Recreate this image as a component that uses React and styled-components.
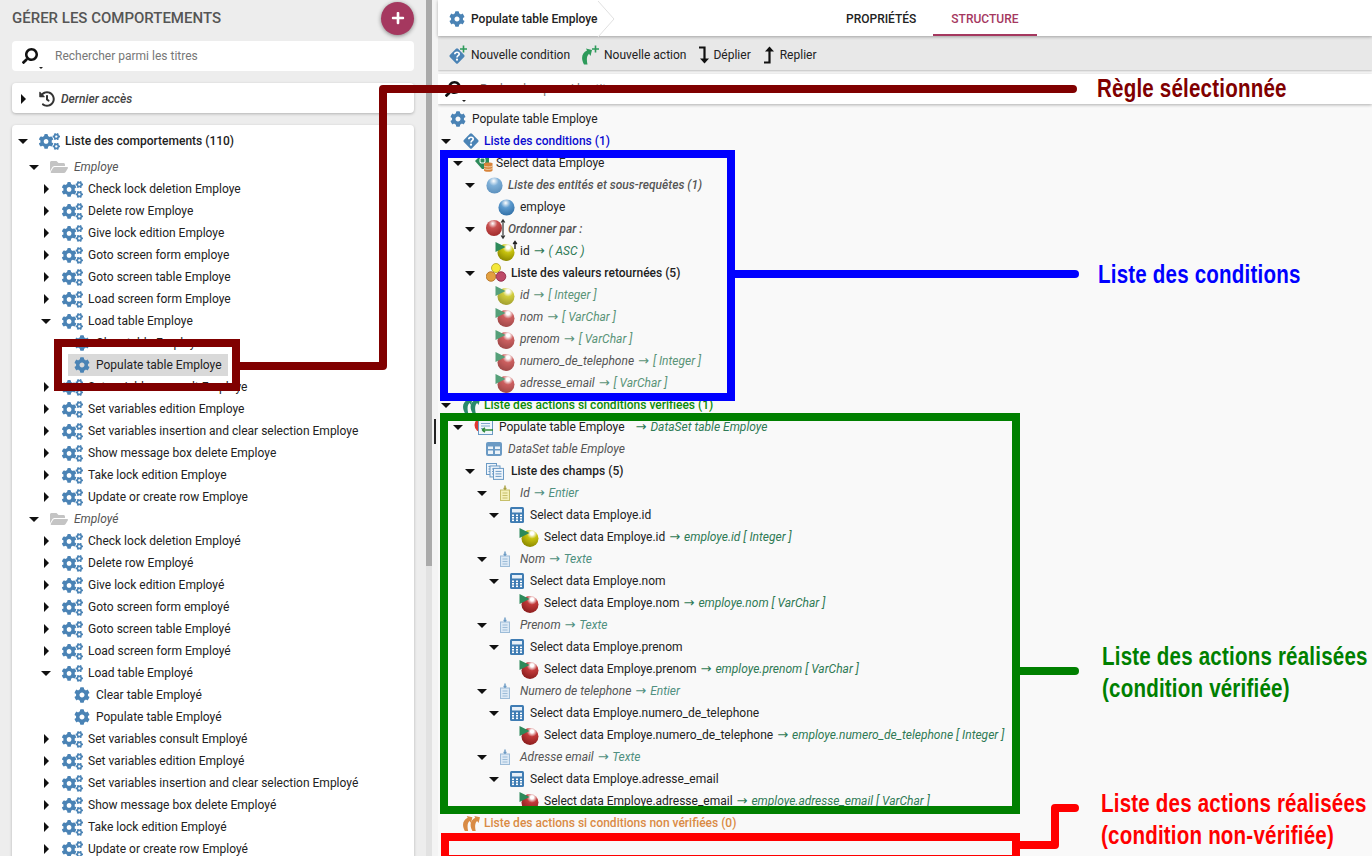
import React, { useId } from 'react';
import styled, { createGlobalStyle } from 'styled-components';
import { FaCog, FaCogs, FaFolderOpen, FaHistory, FaPlus, FaSearch } from 'react-icons/fa';

const STEEL = '#4a83b5';

const GlobalStyle = createGlobalStyle`
  html, body {
    margin: 0;
    height: 100%;
    overflow: hidden;
    font-family: Roboto, "Liberation Sans", sans-serif;
    font-size: 12px;
    color: #222;
  }
`;

/* ---------- small drawings ---------- */

function Ball({ color, size = 20, dark }) {
  const id = useId();
  return (
    <svg width={size} height={size} viewBox="0 0 20 20">
      <defs>
        <radialGradient id={id} cx="45%" cy="22%" r="80%">
          <stop offset="0%" stopColor="#fff" />
          <stop offset="38%" stopColor={color} />
          <stop offset="100%" stopColor={dark} />
        </radialGradient>
      </defs>
      <circle cx="10" cy="10" r="9.500" fill={`url(#${id})`} />
    </svg>
  );
}

const BALLS = {
  blue: ['#5e9bcf', '#2f6ea5'],
  red: ['#c23a3a', '#8e1f1f'],
  yellow: ['#c8c30e', '#8f8c00'],
};

function BallFlag({ tone, faded, arrow }) {
  const [color, dark] = BALLS[tone];
  const id = useId();
  return (
    <FlagWrap $faded={faded}>
      <svg width="24" height="22" viewBox="0 0 24 22">
        <defs>
          <radialGradient id={id} cx="62%" cy="20%" r="78%">
            <stop offset="0%" stopColor="#fff" />
            <stop offset="12%" stopColor="#fff" />
            <stop offset="40%" stopColor={color} />
            <stop offset="100%" stopColor={dark} />
          </radialGradient>
        </defs>
        <circle cx="11" cy="12.500" r="8.500" fill={`url(#${id})`} />
        <path d="M0.500 2 L10.500 7 L0.500 12Z" fill="#2d8a5a" />
        {arrow && <path d="M20 9V2M18.200 4L20 1.500L21.800 4" fill="none" stroke="#222" strokeWidth="1.400" />}
      </svg>
    </FlagWrap>
  );
}

const Diamond = ({ size = 18 }) => (
  <svg width={size} height={size} viewBox="0 0 18 18">
    <rect x="3.200" y="3.200" width="11.600" height="11.600" rx="1.500" transform="rotate(45 9 9)" fill={STEEL} />
    <path d="M6.800 7.200C6.900 4.600 11.200 4.600 11.200 7.100C11.200 8.700 9 8.600 9 10.400" fill="none" stroke="#fff" strokeWidth="1.700" />
    <circle cx="9" cy="12.700" r="1.100" fill="#fff" />
  </svg>
);

const DiamondPlus = () => (
  <svg width="20" height="20" viewBox="0 0 20 20">
    <g transform="translate(0 2)"><rect x="3.200" y="3.200" width="11.600" height="11.600" rx="1.500" transform="rotate(45 9 9)" fill={STEEL} />
      <path d="M6.800 7.200C6.900 4.600 11.200 4.600 11.200 7.100C11.200 8.700 9 8.600 9 10.400" fill="none" stroke="#fff" strokeWidth="1.700" />
      <circle cx="9" cy="12.700" r="1.100" fill="#fff" /></g>
    <path d="M15.500 0.500V7.500M12 4H19" stroke="#2d9a5a" strokeWidth="1.600" />
  </svg>
);

const Curl = ({ color, x = 0 }) => (
  <path transform={`translate(${x} 0)`} d="M3 16.500C-0.500 10 1 5 6 2.500L5 0.500L11 2L9.500 8L8 5.800C5.500 8 5.500 12 6.500 16.500Z" fill={color} />
);

const Curls = ({ color }) => (
  <svg width="18" height="17" viewBox="0 0 19 17">
    <Curl color={color} />
    <Curl color={color} x={8} />
  </svg>
);

const CurlPlus = () => (
  <svg width="20" height="20" viewBox="0 0 20 20">
    <g transform="translate(0 3)"><Curl color="#2d9a5a" /></g>
    <path d="M14.500 0.500V7.500M11 4H18" stroke="#2d9a5a" strokeWidth="1.600" />
  </svg>
);

const SelectIcon = () => (
  <svg width="20" height="20" viewBox="0 0 20 20">
    <path d="M1 8L8 1H15V11L10 16H8Z" fill="#2d8a5a" />
    <rect x="6" y="5" width="5" height="5" rx="1.500" fill="none" stroke="#fff" strokeWidth="1.100" />
    <path d="M10 10.500c0-1.200 8.500-1.200 8.500 0V17.500c0 1.700-8.500 1.700-8.500 0Z" fill="#d8843a" />
    <path d="M10 13c1.500 1.200 7 1.200 8.500 0M10 15.500c1.500 1.200 7 1.200 8.500 0" fill="none" stroke="#f8e0c0" strokeWidth="0.800" />
  </svg>
);

const OrderBall = () => {
  const id = useId();
  return (
    <>
      <defs>
        <radialGradient id={id} cx="42%" cy="22%" r="80%">
          <stop offset="0%" stopColor="#fff" />
          <stop offset="36%" stopColor="#c85050" />
          <stop offset="100%" stopColor="#a02a2a" />
        </radialGradient>
      </defs>
      <circle cx="8" cy="9" r="8" fill={`url(#${id})`} />
    </>
  );
};

const OrderIcon = () => (
  <svg width="20" height="22" viewBox="0 0 20 22">
    <g transform="translate(0 1)"><OrderBall /></g>
    <path d="M17 2V20M15.200 4.500L17 1.800L18.800 4.500M15.200 17.500L17 20.200L18.800 17.500" fill="none" stroke="#333" strokeWidth="1.200" />
  </svg>
);

const TrioIcon = () => (
  <svg width="21" height="20" viewBox="0 0 21 20">
    <circle cx="10" cy="5" r="4.500" fill="#f4e83a" stroke="#b0a020" strokeWidth="0.800" />
    <circle cx="5" cy="13.500" r="4.800" fill="#e3a040" stroke="#b06d20" strokeWidth="0.800" />
    <circle cx="15" cy="13.500" r="4.800" fill="#bd4a68" stroke="#8a2040" strokeWidth="0.800" />
  </svg>
);

const PopulateIcon = () => (
  <svg width="20" height="20" viewBox="0 0 20 20">
    <circle cx="8" cy="8" r="7.500" fill="#e0392f" />
    <rect x="4.500" y="3.500" width="14" height="14" fill="#f0f6fb" stroke="#6b9ac4" />
    <path d="M7 6.500H16M7 9H16M7 11.500H9" stroke="#7fa8cc" />
    <path d="M8 13H19M8 13L11 10.800M8 13L11 15.200" fill="none" stroke="#2d8a3a" strokeWidth="1.500" />
  </svg>
);

const TableIcon = () => (
  <svg width="16" height="14" viewBox="0 0 16 14">
    <rect width="16" height="14" rx="2" fill="#6b9ac4" />
    <path d="M2 4.500H7V7H2ZM9 4.500H14V7H9ZM2 8.500H7V12H2ZM9 8.500H14V12H9Z" fill="#eef4f9" />
  </svg>
);

const DocsIcon = () => (
  <svg width="18" height="17" viewBox="0 0 18 17">
    {[0, 3.500, 7].map((o) => (
      <g key={o} transform={`translate(${o} ${o * 0.7})`}>
        <rect x="0.500" y="0.500" width="10" height="11" fill="#eef4fb" stroke="#6b9ac4" />
        <path d="M2.500 3.500H8.500M2.500 6H8.500M2.500 8.500H8.500" stroke="#6b9ac4" />
      </g>
    ))}
  </svg>
);

const FieldIcon = ({ tone }) => {
  const yellow = tone === 'yellow';
  const fill = yellow ? '#f4f0b8' : '#dce9f5';
  const line = yellow ? '#c6bf6a' : '#9dbcd8';
  return (
    <svg width="14" height="16" viewBox="0 0 14 16">
      <rect x="2.500" y="5" width="9" height="10.500" fill={fill} stroke={line} />
      <path d="M4.500 8H9.500M4.500 10.500H9.500M4.500 13H9.500" stroke={line} />
      <path d="M7 0.500V5M5.500 3.500H8.500" stroke={yellow ? '#a8a040' : '#6b9ac4'} strokeWidth="1.400" />
    </svg>
  );
};

const CalcIcon = () => (
  <svg width="14" height="16" viewBox="0 0 14 16">
    <rect width="14" height="16" rx="1.500" fill="#3f7cb3" />
    <rect x="2" y="2" width="10" height="3.500" fill="#e8f0f8" />
    {[2, 6, 10].map((x) => [7.500, 10, 12.500].map((y) => (
      <rect key={`${x}${y}`} x={x} y={y} width="2" height="1.600" fill="#fff" />
    )))}
  </svg>
);

const Unfold = ({ up }) => (
  <svg width="13" height="18" viewBox="0 0 13 18">
    <g transform={up ? 'translate(0 18) scale(1 -1)' : undefined}>
      <path d="M2 1.500H7.500V14" fill="none" stroke="#111" strokeWidth="2.200" />
      <path d="M3 12.500H12L7.500 17.500Z" fill="#111" />
    </g>
  </svg>
);

/* ---------- layout ---------- */

const Page = styled.div`
  position: relative;
  display: flex;
  width: 100vw;
  height: 100vh;
  overflow: hidden;
  background: #f9f9f9;
`;

const Sidebar = styled.aside`
  width: 426px;
  flex: none;
  box-sizing: border-box;
  padding: 0 12px;
  background: #ededed;
  overflow: hidden;
`;

const SideHead = styled.div`
  display: flex;
  align-items: center;
  justify-content: space-between;
  height: 34px;
  margin: 1px 0 6px;
`;

const SideTitle = styled.h2`
  margin: 0;
  font-size: 15px;
  font-weight: 500;
  color: #555;
`;

const AddButton = styled.button`
  display: flex;
  align-items: center;
  justify-content: center;
  width: 33px;
  height: 33px;
  padding: 0;
  border: none;
  border-radius: 50%;
  color: #fff;
  font-size: 14px;
  background: #a5385f;
  box-shadow: 0 1px 4px rgba(0, 0, 0, 0.45);
`;

const SearchBox = styled.div`
  display: flex;
  align-items: center;
  height: 30px;
  background: #fff;
  color: #777;
  box-shadow: ${(p) => (p.$flat ? '0 1px 3px rgba(0, 0, 0, 0.3)' : 'none')};
  border-radius: ${(p) => (p.$flat ? '0' : '4px')};
`;

const Magnifier = styled.span`
  position: relative;
  display: flex;
  justify-content: center;
  width: ${(p) => p.$w}px;
  margin-right: 4px;
  margin-left: ${(p) => p.$ml}px;
  font-size: 16px;
  color: #111;
  svg { transform: scaleX(-1); }
  &::after {
    content: '';
    position: absolute;
    right: -4px;
    bottom: -5px;
    border: 2.5px solid transparent;
    border-top-color: #222;
    border-bottom: none;
  }
`;

const Card = styled.section`
  margin-top: 12px;
  padding: ${(p) => (p.$list ? '5px 0 0' : '5px 0 3px')};
  background: #fff;
  border-radius: 4px;
  box-shadow: 0 1px 3px rgba(0, 0, 0, 0.25);
`;

const Track = styled.div`
  flex: none;
  width: 6px;
  height: 100%;
  background: linear-gradient(#aaaaaa 566px, #e2e2e2 566px);
`;

const Gutter = styled.div`
  position: relative;
  flex: none;
  width: 6px;
  background: #f4f4f4;
  &::after {
    content: '';
    position: absolute;
    left: 2px;
    top: 419px;
    width: 2px;
    height: 25px;
    background: #222;
  }
`;

const Main = styled.main`
  flex: 1;
  min-width: 0;
  display: flex;
  flex-direction: column;
  background: #f9f9f9;
`;

const TopBar = styled.header`
  display: flex;
  height: 36px;
  flex: none;
  background: #fff;
  box-shadow: 0 1px 3px rgba(0, 0, 0, 0.3);
  z-index: 2;
`;

const Crumb = styled.div`
  display: flex;
  align-items: center;
  gap: 6px;
  width: 390px;
  box-sizing: border-box;
  padding: 1px 0 0 11px;
  font-weight: 500;
  color: #222;
  svg { font-size: 16px; color: ${STEEL}; flex: none; }
`;

const CrumbTip = styled.svg`
  width: 20px;
  height: 36px;
  margin-left: -6px;
`;

const Tab = styled.div`
  display: flex;
  align-items: center;
  padding: 1px 18px 0;
  margin-left: ${(p) => (p.$active ? '-1px' : '0')};
  font-weight: 500;
  color: ${(p) => (p.$active ? '#a5385f' : '#222')};
  box-shadow: ${(p) => (p.$active ? 'inset 0 -2px 0 #a5385f' : 'none')};
`;

const ToolBar = styled.div`
  display: flex;
  align-items: center;
  gap: 11px;
  flex: none;
  box-sizing: border-box;
  height: 34px;
  padding: 3px 0 0 10px;
  background: #e8e8e8;
  box-shadow: 0 1px 2px rgba(0, 0, 0, 0.25);
`;

const Tool = styled.span`
  display: flex;
  align-items: center;
  gap: ${(p) => p.$gap}px;
  color: #222;
`;

const Filter = styled.div`
  flex: none;
  margin-top: 4px;
`;

const TreeArea = styled.div`
  flex: 1;
  min-height: 0;
  padding-top: 4px;
  overflow: hidden;
`;

const Row = styled.div`
  display: flex;
  align-items: center;
  height: 22px;
  margin-bottom: ${(p) => p.$after || 0}px;
  padding-left: ${(p) => p.$pad}px;
  white-space: nowrap;
`;

const ArrowSlot = styled.span`
  display: flex;
  align-items: center;
  justify-content: center;
  flex: none;
  width: 14px;
  margin-right: 9px;
`;

const Arrow = styled.i`
  display: block;
  border-style: solid;
  border-color: transparent;
  ${(p) => (p.$open
    ? 'border-width: 5px 5px 0; border-top-color: #111;'
    : 'border-width: 5px 0 5px 5px; border-left-color: #111;')}
`;

const Content = styled.span`
  display: flex;
  align-items: center;
  height: 22px;
  ${(p) => p.$selected && 'margin-left: -6px; padding: 0 6px; background: #d9d9d9;'}
`;

const IconSlot = styled.span`
  display: flex;
  align-items: center;
  flex: none;
  width: ${(p) => p.$w}px;
  color: ${(p) => p.$color || STEEL};
  font-size: ${(p) => p.$size || 16}px;
`;

const RootCog = styled.span`
  display: flex;
  margin-left: 12px;
`;

const FlagWrap = styled.span`
  display: flex;
  margin-left: -3px;
  opacity: ${(p) => (p.$faded ? 0.8 : 1)};
`;

const Label = styled.span`
  color: ${(p) => p.$color || '#222'};
  font-weight: ${(p) => (p.$strong ? 500 : 400)};
  font-style: ${(p) => (p.$em ? 'italic' : 'normal')};
  margin-left: ${(p) => p.$ml || 0}px;
`;

// line-height 0 so the taller face does not push the row text down
const To = styled.span`
  font-family: "DejaVu Sans", sans-serif;
  font-style: normal;
  font-size: 13px;
  line-height: 0;
  margin: 0 1px;
`;

/* ---------- annotation overlay ---------- */

const Frame = styled.div`
  position: absolute;
  box-sizing: border-box;
  left: ${(p) => p.$x}px;
  top: ${(p) => p.$y}px;
  width: ${(p) => p.$w}px;
  height: ${(p) => p.$h}px;
  border: 8px solid ${(p) => p.$color};
`;

const Lines = styled.svg`
  position: absolute;
  inset: 0;
  width: 100%;
  height: 100%;
  pointer-events: none;
`;

// no narrow face is installed, so the bold is squeezed to the width of the labels
const Note = styled.div`
  position: absolute;
  left: ${(p) => p.$x}px;
  top: ${(p) => p.$y}px;
  color: ${(p) => p.$color};
  font-family: "Liberation Sans", sans-serif;
  font-weight: 700;
  font-size: 26px;
  line-height: 32px;
  letter-spacing: 0.25px;
  white-space: nowrap;
  transform: scaleX(0.79);
  transform-origin: left center;
`;

/* ---------- data ---------- */

const behaviours = (name, low) => [
  `Check lock deletion ${name}`,
  `Delete row ${name}`,
  `Give lock edition ${name}`,
  `Goto screen form ${low}`,
  `Goto screen table ${name}`,
  `Load screen form ${name}`,
];

const afterLoad = (name) => [
  `Set variables consult ${name}`,
  `Set variables edition ${name}`,
  `Set variables insertion and clear selection ${name}`,
  `Show message box delete ${name}`,
  `Take lock edition ${name}`,
  `Update or create row ${name}`,
];

function SideRow({ pad, open, icon, w, size, color, selected, children, after }) {
  return (
    <Row $pad={pad} $after={after}>
      <ArrowSlot>{open !== undefined && <Arrow $open={open} />}</ArrowSlot>
      <Content $selected={selected}>
        <IconSlot $w={w} $size={size} $color={color}>{icon}</IconSlot>
        {children}
      </Content>
    </Row>
  );
}

function Group({ name, low, selected }) {
  return (
    <>
      <SideRow pad={15} open icon={<FaFolderOpen />} w={24} size={18} color="#c4c4c4">
        <Label $em $color="#555">{name}</Label>
      </SideRow>
      {behaviours(name, low).map((t) => (
        <SideRow key={t} pad={27} open={false} icon={<FaCogs />} w={26} size={21}>{t}</SideRow>
      ))}
      <SideRow pad={27} open icon={<FaCogs />} w={26} size={21}>{`Load table ${name}`}</SideRow>
      <SideRow pad={39} icon={<FaCog />} w={22} size={16}>{`Clear table ${name}`}</SideRow>
      <SideRow pad={39} icon={<FaCog />} w={22} size={16} selected={selected}>{`Populate table ${name}`}</SideRow>
      {afterLoad(name).map((t) => (
        <SideRow key={t} pad={27} open={false} icon={<FaCogs />} w={26} size={21}>{t}</SideRow>
      ))}
    </>
  );
}

const ARROW_GREEN = '#2f7a55';
const SOFT_GREEN = '#5a9478';

function Typed({ name, type, soft }) {
  return (
    <span>
      <Label $em={soft} $color={soft ? '#555' : '#222'}>{name}</Label>
      <Label $em $color={soft ? SOFT_GREEN : ARROW_GREEN}> <To>→</To> {type}</Label>
    </span>
  );
}

function Link({ name, target }) {
  return (
    <span>
      <Label>{name}</Label>
      <Label $em $color={ARROW_GREEN}> <To>→</To> {target}</Label>
    </span>
  );
}

function Field({ name, type }) {
  return (
    <span>
      <Label $em $color="#555">{name}</Label>
      <Label $em $color="#4f9080"> <To>→</To> {type}</Label>
    </span>
  );
}

// depth gives the arrow column, w the distance from icon to text
const structure = (() => {
  const rows = [
    { d: 0, open: true, icon: <Diamond />, w: 22, text: <Label $strong $color="#0a0ad0">Liste des conditions (1)</Label> },
    { d: 1, open: true, icon: <SelectIcon />, w: 22, text: 'Select data Employe' },
    { d: 2, open: true, icon: <Ball size={17} color="#7fb0d8" dark="#5b8fbc" />, w: 22, text: <Label $em $strong $color="#555">Liste des entités et sous-requêtes (1)</Label> },
    { d: 3, icon: <Ball size={17} color={BALLS.blue[0]} dark={BALLS.blue[1]} />, w: 22, text: 'employe' },
    { d: 2, open: true, icon: <OrderIcon />, w: 22, text: <Label $em $strong $color="#555">Ordonner par :</Label> },
    { d: 3, icon: <BallFlag tone="yellow" arrow />, w: 22, text: <Typed name="id" type="( ASC )" /> },
    { d: 2, open: true, icon: <TrioIcon />, w: 25, text: <Label $strong>Liste des valeurs retournées (5)</Label> },
    { d: 3, icon: <BallFlag tone="yellow" faded />, w: 22, text: <Typed soft name="id" type="[ Integer ]" /> },
    { d: 3, icon: <BallFlag tone="red" faded />, w: 22, text: <Typed soft name="nom" type="[ VarChar ]" /> },
    { d: 3, icon: <BallFlag tone="red" faded />, w: 22, text: <Typed soft name="prenom" type="[ VarChar ]" /> },
    { d: 3, icon: <BallFlag tone="red" faded />, w: 22, text: <Typed soft name="numero_de_telephone" type="[ Integer ]" /> },
    { d: 3, icon: <BallFlag tone="red" faded />, w: 22, text: <Typed soft name="adresse_email" type="[ VarChar ]" /> },
    { d: 0, open: true, icon: <Curls color="#2a8a6a" />, w: 22, text: <Label $strong $color="#0a8a0a">Liste des actions si conditions vérifiées (1)</Label> },
    {
      d: 1,
      open: true,
      icon: <PopulateIcon />,
      w: 25,
      text: <span>Populate table Employe<Label $ml={10} $em $color={ARROW_GREEN}><To>→</To> DataSet table Employe</Label></span>,
    },
    { d: 2, icon: <TableIcon />, w: 22, text: <Label $em $color="#555">DataSet table Employe</Label> },
    { d: 2, open: true, icon: <DocsIcon />, w: 25, text: <Label $strong>Liste des champs (5)</Label> },
  ];
  const fields = [
    ['Id', 'Entier', 'id', 'Integer', 'yellow'],
    ['Nom', 'Texte', 'nom', 'VarChar', 'red'],
    ['Prenom', 'Texte', 'prenom', 'VarChar', 'red'],
    ['Numero de telephone', 'Entier', 'numero_de_telephone', 'Integer', 'red'],
    ['Adresse email', 'Texte', 'adresse_email', 'VarChar', 'red'],
  ];
  fields.forEach(([title, kind, col, sql, tone]) => {
    rows.push({ d: 3, open: true, icon: <FieldIcon tone={tone} />, w: 22, text: <Field name={title} type={kind} /> });
    rows.push({ d: 4, open: true, icon: <CalcIcon />, w: 20, text: `Select data Employe.${col}` });
    rows.push({
      d: 5,
      icon: <BallFlag tone={tone} />,
      w: 22,
      text: <Link name={`Select data Employe.${col}`} target={`employe.${col} [ ${sql} ]`} />,
    });
  });
  rows.push({ d: 0, icon: <Curls color="#d98b45" />, w: 22, text: <Label $strong $color="#d98b45">Liste des actions si conditions non vérifiées (0)</Label> });
  return rows;
})();

export default function App() {
  return (
    <Page>
      <GlobalStyle />
      <Sidebar>
        <SideHead>
          <SideTitle>GÉRER LES COMPORTEMENTS</SideTitle>
          <AddButton aria-label="Ajouter"><FaPlus /></AddButton>
        </SideHead>
        <SearchBox>
          <Magnifier $w={18} $ml={9}><FaSearch /></Magnifier>
          <Label $ml={12} $color="#777">Rechercher parmi les titres</Label>
        </SearchBox>
        <Card>
          <SideRow pad={4} open={false} icon={<FaHistory />} w={22} size={16} color="#333">
            <Label $em $strong $color="#444">Dernier accès</Label>
          </SideRow>
        </Card>
        <Card $list>
          <SideRow pad={4} open icon={<FaCogs />} w={26} size={21} after={4}>
            <Label $strong>Liste des comportements (110)</Label>
          </SideRow>
          <Group name="Employe" low="employe" selected />
          <Group name="Employé" low="employé" />
        </Card>
      </Sidebar>
      <Track />
      <Gutter />
      <Main>
        <TopBar>
          <Crumb>
            <FaCog />
            Populate table Employe
            <CrumbTip viewBox="0 0 20 36">
              <path d="M1 0L17 18L1 36" fill="none" stroke="#e0e0e0" />
            </CrumbTip>
          </Crumb>
          <Tab>PROPRIÉTÉS</Tab>
          <Tab $active>STRUCTURE</Tab>
        </TopBar>
        <ToolBar>
          <Tool $gap={3}><DiamondPlus />Nouvelle condition</Tool>
          <Tool $gap={3}><CurlPlus />Nouvelle action</Tool>
          <Tool $gap={3}><Unfold />Déplier</Tool>
          <Tool $gap={5}><Unfold up />Replier</Tool>
        </ToolBar>
        <Filter>
          <SearchBox $flat>
            <Magnifier $w={18} $ml={6}><FaSearch /></Magnifier>
            <Label $ml={14} $color="#777">Rechercher parmi les titres</Label>
          </SearchBox>
        </Filter>
        <TreeArea>
          <Row $pad={0}>
            <IconSlot $w={34} $size={16}><RootCog><FaCog /></RootCog></IconSlot>
            Populate table Employe
          </Row>
          {structure.map((r, i) => (
            <Row key={i} $pad={1 + r.d * 12}>
              <ArrowSlot>{r.open !== undefined && <Arrow $open={r.open} />}</ArrowSlot>
              <IconSlot $w={r.w}>{r.icon}</IconSlot>
              {r.text}
            </Row>
          ))}
        </TreeArea>
      </Main>

      <Frame $x={54} $y={339} $w={186} $h={52} $color="#800000" />
      <Frame $x={440} $y={150} $w={295} $h={251} $color="#0000ff" />
      <Frame $x={440} $y={413} $w={580} $h={401} $color="#008000" />
      <Frame $x={441} $y={833} $w={579} $h={30} $color="#ff0000" />
      <Lines viewBox="0 0 1372 856">
        <g fill="none" strokeWidth="8" strokeLinecap="round" strokeLinejoin="round">
          <path d="M240 366H383V89H1073" stroke="#800000" />
          <path d="M735 274H1075" stroke="#0000ff" />
          <path d="M1020 671H1075" stroke="#008000" />
          <path d="M1020 845H1055V808H1075" stroke="#ff0000" />
        </g>
      </Lines>
      <Note $x={1097} $y={72} $color="#800000">Règle sélectionnée</Note>
      <Note $x={1098} $y={258} $color="#0000ff">Liste des conditions</Note>
      <Note $x={1102} $y={640} $color="#008000">Liste des actions réalisées<br />(condition vérifiée)</Note>
      <Note $x={1101} $y={787} $color="#ff0000">Liste des actions réalisées<br />(condition non-vérifiée)</Note>
    </Page>
  );
}
